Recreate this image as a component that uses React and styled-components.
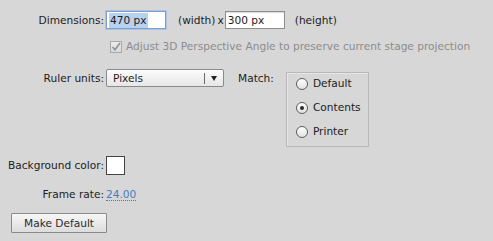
import React from 'react'
import styled, { createGlobalStyle } from 'styled-components'

const GlobalStyle = createGlobalStyle`
  html, body {
    margin: 0;
    padding: 0;
    background: #d7d7d7;
  }
  body {
    font-family: 'DejaVu Sans', 'Liberation Sans', sans-serif;
    font-size: 10.6px;
    line-height: 13px;
    color: #1c1c1c;
  }
`

const Panel = styled.div`
  width: 493px;
  height: 241px;
  box-sizing: border-box;
  padding: 11px 0 0 8px;
  background: #d7d7d7;
  display: grid;
  grid-template-columns: 98px 1fr;
  align-items: center;
  align-content: start;
`

const Label = styled.label`
  justify-self: end;
  white-space: nowrap;
  padding-right: 2px;
  margin-top: ${p => p.top || 0}px;
  align-self: ${p => p.align || 'center'};
`

const Row = styled.div`
  display: flex;
  align-items: ${p => p.align || 'center'};
  margin-top: ${p => p.top || 0}px;
`

const Field = styled.div`
  width: 56px;
  height: 16px;
  box-sizing: content-box;
  background: #fff;
  border: 1px solid ${p => (p.focused ? '#7c9fcc' : '#8e8e8e')};
  box-shadow: ${p => (p.focused ? '0 0 0 1px #a9c3e4' : 'inset 0 1px 1px rgba(0,0,0,0.15)')};
  display: flex;
  align-items: center;
  padding-left: 2px;
`

const Selected = styled.span`
  background: #b7d2f0;
  padding: 1px 1px;
`

const Note = styled.span`
  margin: ${p => p.m || '0'};
  white-space: nowrap;
`

const CheckLine = styled.div`
  grid-column: 2;
  display: flex;
  align-items: center;
  gap: 4px;
  margin: 11px 0 0 4px;
  color: #8c8c8c;
  white-space: nowrap;
`

const CheckBox = styled.span`
  width: 10px;
  height: 10px;
  border: 1px solid #a8a8a8;
  background: linear-gradient(#ececec, #d9d9d9);
  display: flex;
  align-items: center;
  justify-content: center;
`

const Select = styled.div`
  width: 118px;
  height: 18px;
  box-sizing: border-box;
  border: 1px solid #8a8a8a;
  border-radius: 2px;
  background: linear-gradient(#fcfcfc, #e6e6e6);
  display: flex;
  align-items: center;
  padding-left: 6px;
`

const SelectText = styled.span`
  flex: 1;
`

const Divider = styled.span`
  width: 1px;
  height: 11px;
  background: #6a6a6a;
`

const Arrow = styled.span`
  width: 18px;
  display: flex;
  justify-content: center;
  &::after {
    content: '';
    border-left: 3.5px solid transparent;
    border-right: 3.5px solid transparent;
    border-top: 5px solid #222;
  }
`

const GroupBox = styled.div`
  width: 83px;
  height: 75px;
  box-sizing: border-box;
  border: 1px solid #b9b9b9;
  box-shadow: inset 1px 1px 0 #e6e6e6;
  margin: 3px 0 0 12px;
  padding: 4px 0 0 9px;
  display: flex;
  flex-direction: column;
  gap: 11px;
`

const Radio = styled.div`
  display: flex;
  align-items: center;
  gap: 5px;
  height: 13px;
`

const Circle = styled.span`
  width: 10px;
  height: 10px;
  border-radius: 50%;
  border: 1px solid #5e5e5e;
  background: linear-gradient(#ffffff, #e2e2e2);
  display: flex;
  align-items: center;
  justify-content: center;
  &::after {
    content: '';
    width: 4px;
    height: 4px;
    border-radius: 50%;
    background: ${p => (p.checked ? '#2a2a2a' : 'transparent')};
  }
`

const Swatch = styled.div`
  width: 17px;
  height: 17px;
  background: #fff;
  border: 1px solid #444;
`

const Value = styled.span`
  color: #3f7fc2;
  border-bottom: 1px dotted #3f7fc2;
  line-height: 12px;
`

const Button = styled.button`
  grid-column: 1 / 3;
  justify-self: start;
  width: 96px;
  height: 20px;
  margin: 12px 0 0 3px;
  border: 1px solid #8a8a8a;
  border-radius: 1px;
  background: linear-gradient(#f7f7f7, #dcdcdc);
  font-family: 'DejaVu Sans', 'Liberation Sans', sans-serif;
  font-size: 10.6px;
  color: #2a2a2a;
  padding: 0;
`

const Check = () => (
  <svg width="10" height="10" viewBox="0 0 10 10">
    <path d="M1.5 5 L4 7.8 L9 1" fill="none" stroke="#8f8f8f" strokeWidth="1.6" />
  </svg>
)

export default function App() {
  return (
    <>
      <GlobalStyle />
      <Panel>
        <Label>Dimensions:</Label>
        <Row>
          <Field focused>
            <Selected>470 px</Selected>
          </Field>
          <Note m="0 0 0 12px">(width)</Note>
          <Note m="0 1px 0 2px">x</Note>
          <Field>300 px</Field>
          <Note m="0 0 0 10px">(height)</Note>
        </Row>

        <CheckLine>
          <CheckBox>
            <Check />
          </CheckBox>
          Adjust 3D Perspective Angle to preserve current stage projection
        </CheckLine>

        <Label align="start" top={19}>Ruler units:</Label>
        <Row align="flex-start" top={16}>
          <Select>
            <SelectText>Pixels</SelectText>
            <Divider />
            <Arrow />
          </Select>
          <Note m="3px 0 0 14px">Match:</Note>
          <GroupBox>
            <Radio>
              <Circle />
              Default
            </Radio>
            <Radio>
              <Circle checked />
              Contents
            </Radio>
            <Radio>
              <Circle />
              Printer
            </Radio>
          </GroupBox>
        </Row>

        <Label top={9}>Background color:</Label>
        <Row top={9}>
          <Swatch />
        </Row>

        <Label top={13}>Frame rate:</Label>
        <Row top={13}>
          <Value>24.00</Value>
        </Row>

        <Button>Make Default</Button>
      </Panel>
    </>
  )
}
